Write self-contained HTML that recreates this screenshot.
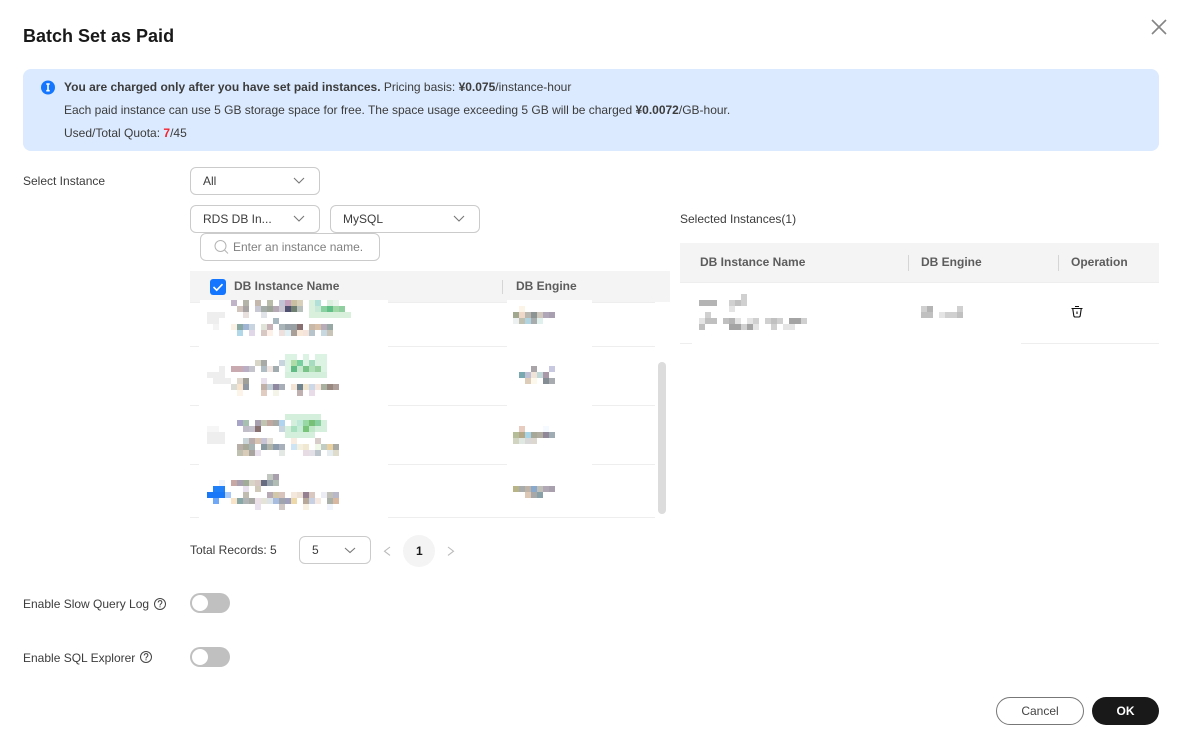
<!DOCTYPE html>
<html lang="en"><head><meta charset="utf-8"><title>Batch Set as Paid</title>
<style>
html,body{margin:0;padding:0;background:#fff}
body{width:1184px;height:750px;position:relative;overflow:hidden;font:12px/16px "Liberation Sans",Arial,sans-serif;color:#3c3c3c}
.t{position:absolute;white-space:nowrap}
.b{position:absolute;box-sizing:border-box;background:#fff;border:1px solid #cbcbcb;border-radius:6px}
.a{position:absolute}
svg{position:absolute;left:0;top:0;overflow:visible}
b{font-weight:bold}
.h{color:#5c5c5c;font-weight:bold}
</style></head><body>
<div class="t" style="left:23px;top:25px;font-size:18px;line-height:22px;font-weight:bold;color:#191919">Batch Set as Paid</div>
<div class="a" style="left:23px;top:69px;width:1136px;height:82px;background:#dbeafe;border-radius:8px"></div>
<div class="t" style="left:64px;top:79px">
<b>You are charged only after you have set paid instances.</b> Pricing basis: <b>¥0.075</b>/instance-hour</div>
<div class="t" style="left:64px;top:102px">Each paid instance can use 5 GB storage space for free. The space usage exceeding 5 GB will be charged <b>¥0.0072</b>/GB-hour.</div>
<div class="t" style="left:64px;top:125px">Used/Total Quota: <span style="color:#f5222d;font-weight:bold">7</span>/45</div>

<div class="t" style="left:23px;top:173px">Select Instance</div>
<div class="b" style="left:190px;top:167px;width:130px;height:28px"></div>
<div class="t" style="left:203px;top:173px">All</div>
<div class="b" style="left:190px;top:205px;width:130px;height:28px"></div>
<div class="t" style="left:203px;top:211px">RDS DB In...</div>
<div class="b" style="left:330px;top:205px;width:150px;height:28px"></div>
<div class="t" style="left:343px;top:211px">MySQL</div>
<div class="b" style="left:200px;top:233px;width:180px;height:28px"></div>
<div class="t" style="left:233px;top:239px;color:#808080">Enter an instance name.</div>

<div class="a" style="left:190px;top:271px;width:480px;height:31px;background:#f4f4f4"></div>
<div class="a" style="left:190px;top:302px;width:465px;height:1px;background:#eee"></div>
<div class="a" style="left:190px;top:346px;width:465px;height:1px;background:#eee"></div>
<div class="a" style="left:190px;top:405px;width:465px;height:1px;background:#eee"></div>
<div class="a" style="left:190px;top:464px;width:465px;height:1px;background:#eee"></div>
<div class="a" style="left:190px;top:517px;width:465px;height:1px;background:#eee"></div>
<div class="a" style="left:199px;top:342px;width:189px;height:6px;background:#fff"></div>
<div class="a" style="left:199px;top:402px;width:189px;height:6px;background:#fff"></div>
<div class="a" style="left:199px;top:462px;width:189px;height:6px;background:#fff"></div>
<div class="a" style="left:199px;top:516px;width:189px;height:3px;background:#fff"></div>
<div class="a" style="left:507px;top:342px;width:85px;height:6px;background:#fff"></div>
<div class="a" style="left:507px;top:402px;width:85px;height:6px;background:#fff"></div>
<div class="a" style="left:507px;top:462px;width:85px;height:6px;background:#fff"></div>
<div class="a" style="left:200px;top:300px;width:188px;height:6px;background:#fff"></div>
<div class="a" style="left:507px;top:300px;width:85px;height:6px;background:#fff"></div>
<div class="a" style="left:502px;top:280px;width:1px;height:14px;background:#d5d5d5"></div>
<div class="a" style="left:658px;top:362px;width:8px;height:152px;background:#dcdcdc;border-radius:4px"></div>
<div class="a" style="left:210px;top:279px;width:16px;height:16px;background:#1476ff;border-radius:3px"></div>
<div class="t h" style="left:234px;top:278px">DB Instance Name</div>
<div class="t h" style="left:516px;top:278px">DB Engine</div>

<div class="t" style="left:680px;top:211px">Selected Instances(1)</div>
<div class="a" style="left:680px;top:243px;width:479px;height:39px;background:#f4f4f4"></div>
<div class="a" style="left:680px;top:282px;width:479px;height:1px;background:#eee"></div>
<div class="a" style="left:680px;top:343px;width:479px;height:1px;background:#eee"></div>
<div class="a" style="left:692px;top:341px;width:329px;height:3px;background:#fff"></div>
<div class="a" style="left:908px;top:255px;width:1px;height:16px;background:#d5d5d5"></div>
<div class="a" style="left:1058px;top:255px;width:1px;height:16px;background:#d5d5d5"></div>
<div class="t h" style="left:700px;top:254px">DB Instance Name</div>
<div class="t h" style="left:921px;top:254px">DB Engine</div>
<div class="t h" style="left:1071px;top:254px">Operation</div>

<div class="t" style="left:190px;top:542px">Total Records: 5</div>
<div class="b" style="left:299px;top:536px;width:72px;height:28px"></div>
<div class="t" style="left:312px;top:542px">5</div>
<div class="a" style="left:403px;top:535px;width:32px;height:32px;border-radius:50%;background:#f4f4f4"></div>
<div class="t" style="left:416px;top:543px;font-weight:bold;color:#191919">1</div>

<div class="t" style="left:23px;top:596px">Enable Slow Query Log</div>
<div class="t" style="left:23px;top:650px">Enable SQL Explorer</div>
<div class="a" style="left:190px;top:593px;width:40px;height:20px;border-radius:10px;background:#c0c0c0"></div>
<div class="a" style="left:192px;top:595px;width:16px;height:16px;border-radius:50%;background:#fff"></div>
<div class="a" style="left:190px;top:647px;width:40px;height:20px;border-radius:10px;background:#c0c0c0"></div>
<div class="a" style="left:192px;top:649px;width:16px;height:16px;border-radius:50%;background:#fff"></div>

<div class="a" style="left:996px;top:697px;width:88px;height:28px;box-sizing:border-box;border:1px solid #777;border-radius:14px;text-align:center;line-height:26px;color:#444">Cancel</div>
<div class="a" style="left:1092px;top:697px;width:67px;height:28px;border-radius:14px;background:#191919;color:#fff;text-align:center;line-height:28px;font-weight:bold">OK</div>

<svg width="1184" height="750" viewBox="0 0 1184 750" fill="none">
<path d="M1152 20l14 14M1166 20l-14 14" stroke="#858585" stroke-width="1.6"/>
<circle cx="48" cy="87.500" r="7" fill="#1476ff"/>
<path d="M46.300 84h3.400M48 84.500v6M46.300 90.700h3.400" stroke="#fff" stroke-width="1.600"/>
<g stroke="#777" stroke-width="1.100">
<path d="M294 178l5 5 5-5M294 216l5 5 5-5M454 216l5 5 5-5M345 548l5 4.500 5-4.500"/>
</g>
<path d="M390 547l-5.500 4.200 5.500 4.200M448 547l5.500 4.200-5.500 4.200" stroke="#bbb" stroke-width="1.100"/>
<circle cx="220.500" cy="246" r="5.500" stroke="#b4b4b4" stroke-width="1"/>
<path d="M224.500 250l3.500 3.500" stroke="#b4b4b4" stroke-width="1"/>
<path d="M213.500 287l3.200 3.200 5.800-6" stroke="#fff" stroke-width="1.600"/>
<g stroke="#444" stroke-width="1">
<circle cx="160" cy="604" r="5.500"/><circle cx="146" cy="657" r="5.500"/>
</g>
<path d="M158.200 602.500c.2-2.400 3.600-2.400 3.700-.2 0 1.500-1.900 1.500-1.900 3.200M160 606.300v1.100M144.200 655.500c.2-2.400 3.600-2.400 3.700-.2 0 1.500-1.900 1.500-1.900 3.200M146 659.300v1.100" stroke="#444"/>
<path d="M1071.500 308.500h11M1075 306.500h4M1072.800 309l1 6.800q.2 1.200 1.400 1.200h3.600q1.200 0 1.400-1.200l1-6.800M1077 311.500v2.500" stroke="#111" stroke-width="1.100"/>
<g stroke-width="6" shape-rendering="crispEdges">
<path stroke="#c0b4c8" d="M231 303h6"/><path stroke="#b4b4a8" d="M243 303h6"/><path stroke="#c4b8ac" d="M255 303h6"/><path stroke="#b8bca8" d="M267 303h6"/><path stroke="#c0c4d4" d="M279 303h6"/><path stroke="#c4a0bc" d="M285 303h6"/><path stroke="#c8c0a0" d="M291 303h6"/><path stroke="#d8d0b8" d="M297 303h6"/><path stroke="#d8f0dc" d="M309 303h6M309 309h6M309 315h42"/><path stroke="#b0e0d8" d="M315 303h6"/><path stroke="#dcf0e0" d="M327 303h6"/><path stroke="#e8f4ec" d="M333 303h6"/>
<path stroke="#d0c4bc" d="M237 309h6"/><path stroke="#a8a4a4" d="M243 309h6"/><path stroke="#c8c8d4" d="M255 309h6"/><path stroke="#a4aca8" d="M261 309h6"/><path stroke="#9ca498" d="M267 309h6"/><path stroke="#b4a8b4" d="M273 309h6"/><path stroke="#c8c4d0" d="M279 309h6"/><path stroke="#505070" d="M285 309h6"/><path stroke="#708070" d="M291 309h6"/><path stroke="#b8c0bc" d="M297 309h6"/><path stroke="#c8e8d8" d="M315 309h6"/><path stroke="#88d0a0" d="M321 309h6"/><path stroke="#60c088" d="M327 309h6"/><path stroke="#a0d8a8" d="M333 309h6"/><path stroke="#90d0a0" d="M339 309h6"/>
<path stroke="#eee" d="M207 315h18M207 321h12M219 369h6M207 375h18M213 381h18M207 435h18M207 441h18"/><path stroke="#e8e0dc" d="M243 315h6"/><path stroke="#e0e4e8" d="M261 315h6"/><path stroke="#a8b8c0" d="M273 321h6"/>
<path stroke="#f4f4f4" d="M213 327h6"/><path stroke="#fbf0e4" d="M231 327h6"/><path stroke="#88a8a4" d="M237 327h6"/><path stroke="#a0b4d4" d="M243 327h6"/><path stroke="#c8d4e0" d="M249 327h6"/><path stroke="#e0e4d8" d="M261 327h6"/><path stroke="#c8b4b8" d="M267 327h6"/><path stroke="#a8b4b8" d="M279 327h6"/><path stroke="#98a0a8" d="M285 327h6"/><path stroke="#98a0a4" d="M291 327h6"/><path stroke="#887070" d="M297 327h6"/><path stroke="#c8b8a8" d="M309 327h6"/><path stroke="#d8c0a8" d="M315 327h6"/><path stroke="#b8acb8" d="M321 327h6"/><path stroke="#98a8a4" d="M327 327h6"/>
<path stroke="#b0d8e8" d="M237 333h6"/><path stroke="#e0d8e8" d="M249 333h6"/><path stroke="#d8c8c4" d="M261 333h6"/><path stroke="#fcf0e8" d="M267 333h6"/><path stroke="#eee0dc" d="M279 333h6"/><path stroke="#e0f0f4" d="M285 333h6"/><path stroke="#a8a098" d="M291 333h6"/><path stroke="#f8e8d8" d="M297 333h6"/><path stroke="#f4e4dc" d="M303 333h6"/><path stroke="#b8c4cc" d="M309 333h6"/><path stroke="#c8d8e0" d="M321 333h6"/><path stroke="#c8c4b8" d="M327 333h6"/>

<path stroke="#dcf2e2" d="M285 357h12M303 357h6M315 357h12M285 363h6M303 363h6M315 363h12M285 369h6M321 369h6"/><path stroke="#b0dca8" d="M291 363h6"/><path stroke="#78d0a0" d="M297 363h6"/><path stroke="#a8dcc0" d="M309 363h6"/><path stroke="#60bc84" d="M291 369h6"/><path stroke="#c8e8d0" d="M297 369h6"/><path stroke="#78c488" d="M303 369h6"/><path stroke="#b0e0b8" d="M309 369h6"/><path stroke="#98d0a0" d="M315 369h6"/><path stroke="#d4f0dc" d="M285 375h42"/>
<path stroke="#d8d6c6" d="M255 363h6"/><path stroke="#a8aaa8" d="M261 363h6"/><path stroke="#c8d4de" d="M279 363h6"/>
<path stroke="#c9aab0" d="M231 369h12"/><path stroke="#b9aec4" d="M243 369h6"/><path stroke="#c4c4cc" d="M249 369h6"/><path stroke="#b0bcc4" d="M261 369h6"/><path stroke="#f0e4e0" d="M267 369h6"/><path stroke="#a0acb0" d="M273 369h6"/>
<path stroke="#e0d8cc" d="M237 381h6"/><path stroke="#a0a098" d="M243 381h6"/><path stroke="#e8e0ec" d="M261 381h6"/>
<path stroke="#d8dcd4" d="M231 387h6"/><path stroke="#f8e4cc" d="M237 387h6"/><path stroke="#9098a4" d="M243 387h6"/><path stroke="#c0b0a8" d="M261 387h6"/><path stroke="#c0ccd4" d="M267 387h6"/><path stroke="#9088a0" d="M273 387h6"/><path stroke="#a8aeb8" d="M279 387h6"/><path stroke="#f4e4d4" d="M291 387h6"/><path stroke="#708490" d="M297 387h6"/><path stroke="#f0e4cc" d="M303 387h6"/><path stroke="#ccd8e8" d="M309 387h6"/><path stroke="#f4e4dc" d="M315 387h6"/><path stroke="#a8b0a0" d="M321 387h6"/><path stroke="#988880" d="M327 387h6"/><path stroke="#b0a09c" d="M333 387h6"/>
<path stroke="#fcf4e8" d="M237 393h6"/><path stroke="#e0ccc0" d="M261 393h6"/><path stroke="#f4f4e8" d="M273 393h6"/><path stroke="#c0b0b0" d="M297 393h6"/><path stroke="#e8dce8" d="M309 393h6"/>

<path stroke="#d4f0dc" d="M285 417h36M291 423h6M321 423h6M285 429h6M315 429h12M285 435h30"/><path stroke="#a8a4c8" d="M237 423h6"/><path stroke="#a8c0b0" d="M243 423h6"/><path stroke="#a8a0b0" d="M255 423h6"/><path stroke="#c0c4b0" d="M261 423h6"/><path stroke="#c0a8a0" d="M267 423h6"/><path stroke="#a8a8a4" d="M273 423h6"/><path stroke="#b0d4f0" d="M279 423h6"/><path stroke="#c0e8d8" d="M297 423h6"/><path stroke="#98d8a4" d="M303 423h6"/><path stroke="#78c078" d="M309 423h6"/><path stroke="#88d0a0" d="M315 423h6"/>
<path stroke="#f6f6f6" d="M207 429h12"/><path stroke="#c0bcc8" d="M243 429h6"/><path stroke="#c4c0cc" d="M249 429h6"/><path stroke="#887070" d="M255 429h6"/><path stroke="#c8d4e0" d="M279 429h6"/><path stroke="#a8e0c0" d="M291 429h6"/><path stroke="#c8ecd8" d="M297 429h6"/><path stroke="#78c478" d="M303 429h6"/><path stroke="#c0e8c8" d="M309 429h6"/>
<path stroke="#c8d4d8" d="M243 441h6"/><path stroke="#b8acac" d="M249 441h6"/><path stroke="#d8c4b0" d="M255 441h6"/><path stroke="#c8c4d8" d="M261 441h6"/><path stroke="#e4e0d8" d="M267 441h6"/><path stroke="#f8ece0" d="M291 441h6"/><path stroke="#d8ccc8" d="M315 441h6"/>
<path stroke="#b8b0a8" d="M237 447h6"/><path stroke="#a8a898" d="M243 447h6"/><path stroke="#a8b4b4" d="M249 447h6"/><path stroke="#8898a0" d="M261 447h6"/><path stroke="#b0b4a8" d="M267 447h6"/><path stroke="#8c9cac" d="M273 447h6"/><path stroke="#a8b0bc" d="M279 447h6"/><path stroke="#cce4f4" d="M291 447h6"/><path stroke="#f4f0e0" d="M297 447h6"/><path stroke="#f0e8d0" d="M303 447h6"/><path stroke="#f0f8e8" d="M315 447h6"/><path stroke="#c0ccc4" d="M321 447h6"/><path stroke="#e8d0a0" d="M327 447h6"/><path stroke="#a8a8a4" d="M333 447h6"/>
<path stroke="#c0c0b0" d="M237 453h6"/><path stroke="#d8ccb8" d="M243 453h6"/><path stroke="#a8a4a0" d="M249 453h6"/><path stroke="#e8e0ec" d="M255 453h6"/><path stroke="#e4e8e4" d="M279 453h6"/><path stroke="#e8dce4" d="M303 453h6"/><path stroke="#e4e0e8" d="M309 453h6"/><path stroke="#bcc4cc" d="M315 453h6"/><path stroke="#e4ecf0" d="M327 453h6"/><path stroke="#e0dccc" d="M333 453h6"/>

<path stroke="#c0c8c0" d="M267 477h6"/><path stroke="#a8a0ac" d="M273 477h6"/>
<path stroke="#eef4fc" d="M219 483h6"/><path stroke="#c8a8a4" d="M231 483h6"/><path stroke="#a8a0b0" d="M237 483h6"/><path stroke="#a0ac98" d="M243 483h6"/><path stroke="#d8d4c8" d="M249 483h6"/><path stroke="#d8c8c4" d="M255 483h6"/><path stroke="#686c80" d="M261 483h6"/><path stroke="#98a4ac" d="M267 483h6"/><path stroke="#b0bcb4" d="M273 483h6"/>
<path stroke="#2080f8" d="M213 489h12"/><path stroke="#e8e0ec" d="M243 489h6"/><path stroke="#d0c8b8" d="M255 489h6"/>
<path stroke="#1878f8" d="M207 495h18"/><path stroke="#a8c8f8" d="M225 495h6"/><path stroke="#c0bcb0" d="M243 495h6"/><path stroke="#b8aab4" d="M267 495h6"/><path stroke="#d0c8a8" d="M273 495h6"/><path stroke="#d8c4bc" d="M279 495h6"/><path stroke="#f4e8dc" d="M291 495h6"/><path stroke="#ece0d4" d="M297 495h6"/><path stroke="#948090" d="M303 495h6"/><path stroke="#d8c8c0" d="M309 495h6"/><path stroke="#ecedf4" d="M321 495h6"/><path stroke="#c0c0b8" d="M327 495h6"/><path stroke="#b8b8c8" d="M333 495h6"/>
<path stroke="#70a8f8" d="M213 501h6"/><path stroke="#f8e4c8" d="M231 501h6"/><path stroke="#88a8a8" d="M237 501h6"/><path stroke="#b0b4b4" d="M243 501h6"/><path stroke="#a8a8a4" d="M249 501h6"/><path stroke="#ecdfe8" d="M255 501h6"/><path stroke="#e4e4d8" d="M261 501h6"/><path stroke="#dce4e8" d="M267 501h6"/><path stroke="#a8bce0" d="M273 501h6"/><path stroke="#a0a4ac" d="M279 501h6"/><path stroke="#a0a0bc" d="M285 501h6"/><path stroke="#ecd8a8" d="M291 501h6"/><path stroke="#b8a898" d="M303 501h6"/><path stroke="#c8d0e4" d="M309 501h6"/><path stroke="#f4e8e0" d="M315 501h6"/><path stroke="#a8b0a8" d="M327 501h6"/><path stroke="#d8b8a0" d="M333 501h6"/>
<path stroke="#e8e0ec" d="M255 507h6"/><path stroke="#d0c8c4" d="M279 507h6"/><path stroke="#f8f0e0" d="M303 507h6"/><path stroke="#f0f4fc" d="M327 507h6"/>

<path stroke="#fdf4e8" d="M519 309h6"/><path stroke="#a0a890" d="M513 315h6"/><path stroke="#f0d8c8" d="M519 315h6"/><path stroke="#b8b8b0" d="M525 315h6"/><path stroke="#8c9494" d="M531 315h6"/><path stroke="#d0c8bc" d="M537 315h6"/><path stroke="#b0a8b8" d="M543 315h6"/><path stroke="#a8a0b0" d="M549 315h6"/>
<path stroke="#ecf0f0" d="M513 321h6"/><path stroke="#c0c0b0" d="M519 321h6"/><path stroke="#b0d4e0" d="M525 321h6"/><path stroke="#a8acac" d="M531 321h6"/><path stroke="#e0f0ec" d="M537 321h6"/>
<path stroke="#a8a4a8" d="M531 369h6"/><path stroke="#c8c8e0" d="M549 369h6"/><path stroke="#78a8b0" d="M519 375h6"/><path stroke="#c0c0d4" d="M525 375h6"/><path stroke="#f0e4d8" d="M531 375h6"/><path stroke="#c0d8d8" d="M537 375h6"/><path stroke="#a898a8" d="M543 375h6"/><path stroke="#dcccb8" d="M525 381h6"/><path stroke="#fdf8ec" d="M531 381h6"/><path stroke="#848c94" d="M543 381h6"/><path stroke="#a8acb0" d="M549 381h6"/>
<path stroke="#e8ccc0" d="M519 429h6"/><path stroke="#f4faff" d="M543 429h6"/><path stroke="#b4bc98" d="M513 435h6"/><path stroke="#b4a888" d="M519 435h6"/><path stroke="#a8d4e8" d="M525 435h6"/><path stroke="#a8a898" d="M531 435h6"/><path stroke="#b0aca0" d="M537 435h6"/><path stroke="#908898" d="M543 435h6"/><path stroke="#a0acb4" d="M549 435h6"/><path stroke="#d0d4c0" d="M513 441h6"/><path stroke="#e0e8e4" d="M519 441h6"/><path stroke="#d8d8d8" d="M525 441h6"/><path stroke="#dcd8d0" d="M531 441h6"/>
<path stroke="#b8b488" d="M513 489h6"/><path stroke="#a8acac" d="M519 489h6"/><path stroke="#c0b4a8" d="M525 489h6"/><path stroke="#88a8cc" d="M531 489h6"/><path stroke="#c0c0b8" d="M537 489h6"/><path stroke="#b0a8b4" d="M543 489h6"/><path stroke="#a8a0ac" d="M549 489h6"/><path stroke="#dcc8b4" d="M525 495h6"/><path stroke="#a8a8a8" d="M531 495h6"/><path stroke="#88a0a8" d="M537 495h6"/>

<path stroke="#d0d0d0" d="M741 297h6M729 303h6M741 303h6M705 315h6M753 321h6M777 321h6M765 321h6M747 327h6M771 327h6M921 309h6"/>
<path stroke="#b4b4b4" d="M699 303h18M729 321h6M927 309h6"/><path stroke="#c0c0c0" d="M735 303h6M705 321h12M723 321h6M699 327h6M771 321h6M921 315h12M957 315h6"/>
<path stroke="#e4e4e4" d="M729 309h6M699 321h6M735 321h6M747 321h6M753 327h6M783 327h12M939 315h6"/>
<path stroke="#a4a4a4" d="M729 327h12M747 327h6M789 321h12"/><path stroke="#d0d0d0" d="M801 321h6M741 327h6M945 315h12M957 309h6"/>
</g>
</svg>
</body></html>
